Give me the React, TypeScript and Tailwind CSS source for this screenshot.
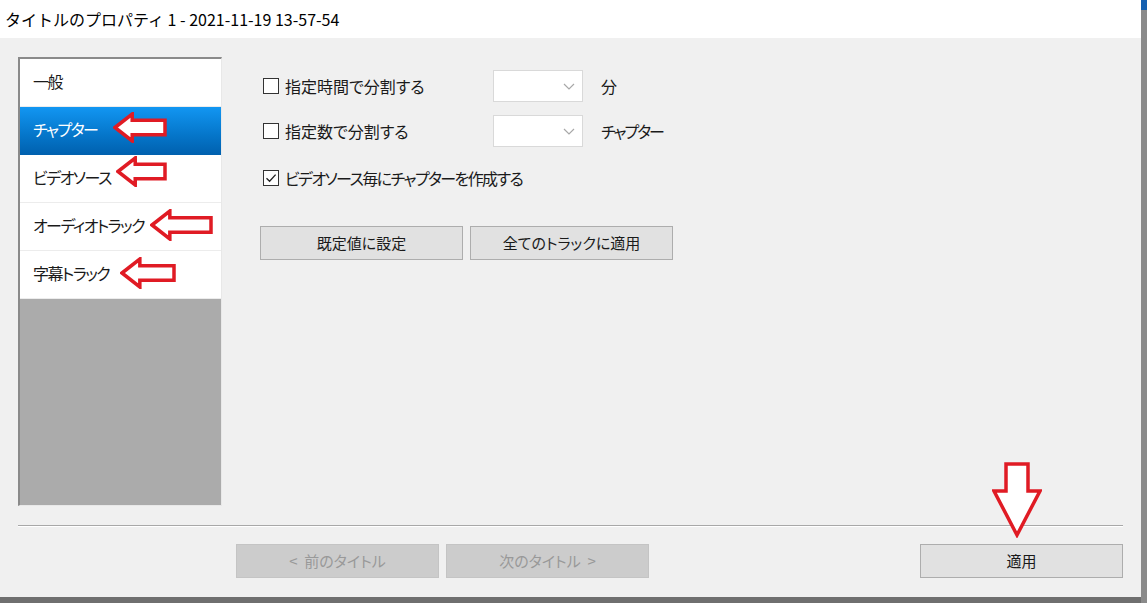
import React from "react"

const font = "font-['Noto_Sans_CJK_JP','Noto_Sans',sans-serif]"
const palt = "[font-feature-settings:'palt']"

const items = ["一般", "チャプター", "ビデオソース", "オーディオトラック", "字幕トラック"]

function LeftArrow({ x, y, w, h }: { x: number; y: number; w: number; h: number }) {
  const head = h * 0.62
  const s1 = h * 0.27
  const s2 = h * 0.73
  return (
    <svg
      className="absolute pointer-events-none"
      style={{ left: x, top: y }}
      width={w}
      height={h}
      viewBox={`0 0 ${w} ${h}`}
    >
      <path
        d={`M2 ${h / 2} L${head} 2 L${head} ${s1} L${w - 2} ${s1} L${w - 2} ${s2} L${head} ${s2} L${head} ${h - 2} Z`}
        fill="#fff"
        stroke="#e01b24"
        strokeWidth={3.5}
        strokeLinejoin="miter"
      />
    </svg>
  )
}

function DownArrow() {
  return (
    <svg className="absolute pointer-events-none" style={{ left: 992, top: 462 }} width={50} height={76} viewBox="0 0 50 76">
      <path
        d="M14 2 L36 2 L36 29 L48 29 L25 73 L2 29 L14 29 Z"
        fill="#fff"
        stroke="#e01b24"
        strokeWidth={3.5}
        strokeLinejoin="miter"
      />
    </svg>
  )
}

function Checkbox({ checked }: { checked?: boolean }) {
  return (
    <div className="w-[16px] h-[16px] border border-[#333] bg-white flex items-center justify-center shrink-0">
      {checked && (
        <svg width="12" height="12" viewBox="0 0 12 12">
          <path d="M1.5 6.2 L4.6 9.3 L10.6 2.6" fill="none" stroke="#222" strokeWidth="1.3" />
        </svg>
      )}
    </div>
  )
}

function Combo() {
  return (
    <div className="w-[90px] h-[32px] bg-white border border-[#d9d9d9] flex items-center justify-end pr-[7px]">
      <svg width="12" height="7" viewBox="0 0 12 7">
        <path d="M1 1 L6 6 L11 1" fill="none" stroke="#a8a8a8" strokeWidth="1.2" />
      </svg>
    </div>
  )
}

function Btn({ label, disabled, className = "" }: { label: string; disabled?: boolean; className?: string }) {
  return (
    <div
      className={
        "w-[203px] h-[34px] flex items-center justify-center text-[15px] border whitespace-pre " +
        palt +
        " " +
        (disabled
          ? "bg-[#cccccc] border-[#c4c4c4] text-[#999999] "
          : "bg-[#e1e1e1] border-[#adadad] text-[#1a1a1a] ") +
        className
      }
    >
      {label}
    </div>
  )
}

export default function App() {
  return (
    <div className={"relative w-[1147px] h-[603px] flex text-[#1a1a1a] " + font}>
      <div className="w-[1141px] h-full flex flex-col">
        {/* title bar */}
        <div className="h-[38px] bg-white flex items-center pl-[5px] text-[16px] text-black">
          タイトルのプロパティ 1 - 2021-11-19 13-57-54
        </div>

        <div className="flex-1 bg-[#f0f0f0] pl-[18px] pr-[18px] pt-[19px] flex flex-col">
          <div className="flex h-[449px]">
            {/* side list */}
            <div className="w-[204px] h-full flex flex-col bg-[#ababab] border-l-2 border-t-2 border-[#8a8a8a] border-r border-b border-r-[#e8e8e8] border-b-[#e8e8e8]">
              {items.map((it, i) => (
                <div
                  key={it}
                  className={
                    "h-[48px] flex items-center pl-[13px] pb-[4px] text-[16px] tracking-[-1.5px] [font-feature-settings:'palt'] " +
                    (i === 1
                      ? "bg-gradient-to-b from-[#1296f2] to-[#0060ae] text-white"
                      : "bg-white border-b border-[#ececec]")
                  }
                >
                  {it}
                </div>
              ))}
            </div>

            {/* settings panel */}
            <div className={"ml-[38px] pt-[13px] flex flex-col text-[16px] " + palt}>
              <div className="h-[32px] flex items-center">
                <div className="w-[233px] flex items-center gap-[6px] pl-[3px]">
                  <Checkbox />
                  <span>指定時間で分割する</span>
                </div>
                <Combo />
                <span className="ml-[18px]">分</span>
              </div>
              <div className="h-[32px] mt-[13px] flex items-center">
                <div className="w-[233px] flex items-center gap-[6px] pl-[3px]">
                  <Checkbox />
                  <span>指定数で分割する</span>
                </div>
                <Combo />
                <span className="ml-[18px] tracking-[-2px]">チャプター</span>
              </div>
              <div className="h-[24px] mt-[19px] flex items-center gap-[6px] pl-[3px]">
                <Checkbox checked />
                <span className="tracking-[-1.6px]">ビデオソース毎にチャプターを作成する</span>
              </div>
              <div className="mt-[36px] flex gap-[7px]">
                <Btn label="既定値に設定" />
                <Btn label="全てのトラックに適用" />
              </div>
            </div>
          </div>

          <div className="mt-[19px] h-[2px] bg-[#a8a8a8] border-b border-white" />

          <div className="mt-[17px] flex items-center">
            <Btn label="<  前のタイトル" disabled className="ml-[218px]" />
            <Btn label="次のタイトル  >" disabled className="ml-[7px]" />
            <Btn label="適用" className="ml-auto" />
          </div>
        </div>

        <div className="h-[6px] bg-[#6f6f6f]" />
      </div>
      <div className="w-[6px] h-full bg-[#8a8a8a] flex flex-col">
        <div className="h-[10px] bg-[#1560b0]" />
      </div>

      <LeftArrow x={113} y={112} w={54} h={31} />
      <LeftArrow x={116} y={156} w={51} h={31} />
      <LeftArrow x={150} y={209} w={63} h={32} />
      <LeftArrow x={120} y={257} w={56} h={32} />
      <DownArrow />
    </div>
  )
}
